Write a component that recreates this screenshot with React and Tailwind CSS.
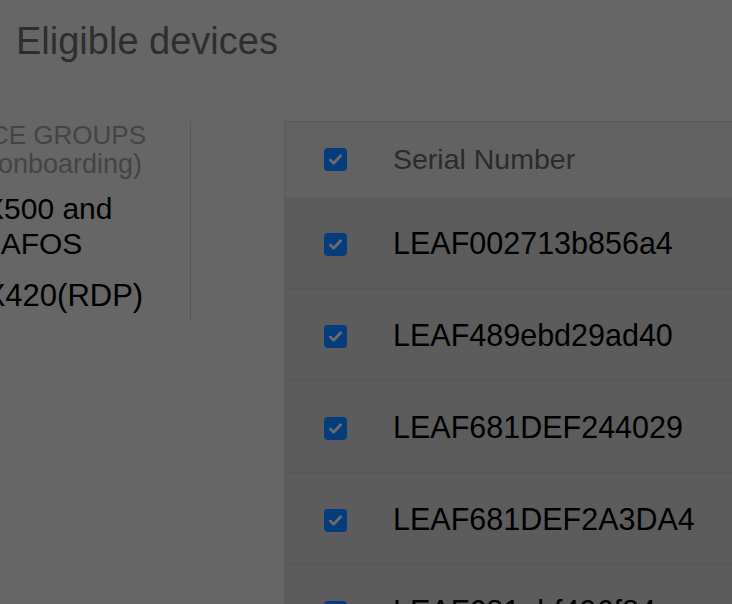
const devices = [
  'LEAF002713b856a4',
  'LEAF489ebd29ad40',
  'LEAF681DEF244029',
  'LEAF681DEF2A3DA4',
  'LEAF681abf496f84',
]

function Check() {
  return (
    <span className="flex h-[23px] w-[23px] shrink-0 items-center justify-center rounded-[4px] bg-[#053c7c]">
      <svg width="15" height="15" viewBox="0 0 16 16" fill="none">
        <path d="M2.5 8.5l3.5 3.5 7.5-8" stroke="#6b6b6b" strokeWidth="3" strokeLinecap="round" strokeLinejoin="round" />
      </svg>
    </span>
  )
}

export default function App() {
  return (
    <div className="h-[604px] w-[732px] overflow-hidden bg-[#666] font-['Liberation_Sans',Arial,sans-serif]">
      <h1 className="pl-4 pt-[19px] text-[38px] leading-[44px] text-[#2e2e2e]">Eligible devices</h1>

      <div className="mt-[58px] flex items-start">
        {/* grupos */}
        <div className="w-[191px] shrink-0 overflow-hidden border-r border-[#595959] pb-2">
          <div className="-ml-[80px] w-[226px] whitespace-nowrap text-right text-[26px] leading-[29px] text-[#444]">
            <div>DEVICE GROUPS</div>
            <div className="pr-[4px] text-[27px]">(Pre-onboarding)</div>
          </div>
          <div className="-ml-[36px] w-[184px] leading-[35px] text-black">
            <div className="mt-[12px] text-[30px]">EX500 and LEAFOS</div>
            <div className="mt-[17px] whitespace-nowrap text-[31px]">EX420(RDP)</div>
          </div>
        </div>

        {/* tabla */}
        <div className="ml-[93px] min-w-[460px] flex-1 border-l border-t border-[#595959] bg-[#5c5c5c]">
          <div className="flex h-[75px] items-center bg-[#626262]">
            <div className="w-[79px] shrink-0 pl-[39px]">
              <Check />
            </div>
            <span className="ml-[29px] text-[28.5px] text-[#2b2b2b]">Serial Number</span>
          </div>
          {devices.map(d => (
            <div key={d} className="flex h-[92px] items-center border-b border-[#575757]">
              <div className="mt-[4px] w-[79px] shrink-0 pl-[39px]">
                <Check />
              </div>
              <span className="ml-[29px] mt-[2px] whitespace-nowrap text-[30.5px] text-black">{d}</span>
            </div>
          ))}
        </div>
      </div>
    </div>
  )
}
